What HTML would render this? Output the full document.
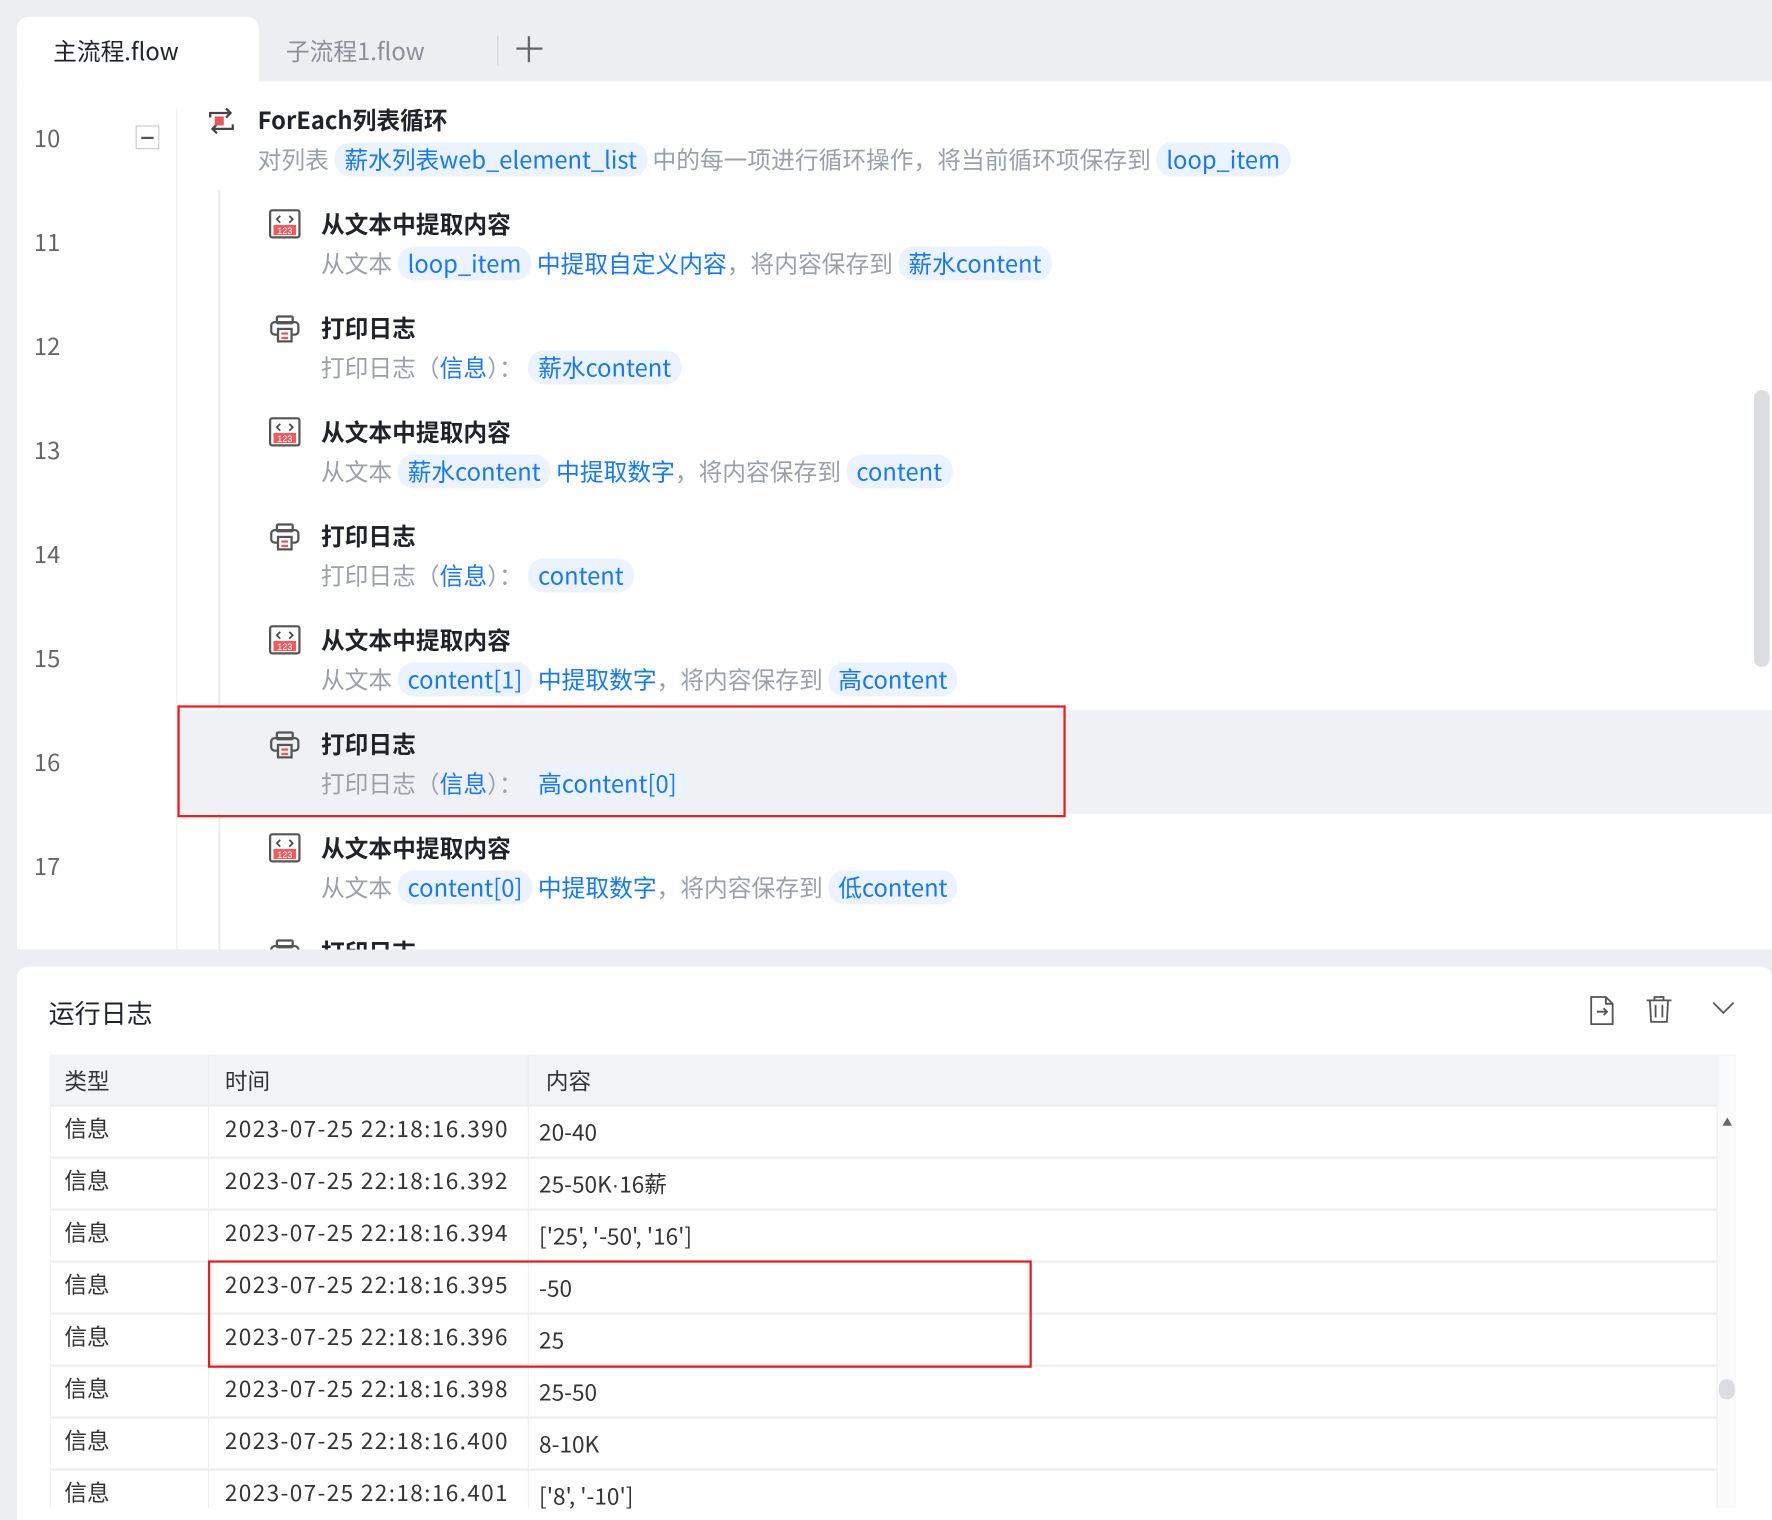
<!DOCTYPE html>
<html><head><meta charset="utf-8"><style>
*{margin:0;padding:0;box-sizing:border-box}
html,body{width:1772px;height:1508px;overflow:hidden;background:#eceef2}
#w{position:absolute;left:0;top:0;width:1568px;height:1334px;transform:scale(1.1301,1.1304);transform-origin:0 0;font-family:"Noto Sans CJK SC","Liberation Sans",sans-serif;color:#222}
.a{position:absolute;white-space:nowrap}
.tab{left:15px;top:15px;width:214px;height:60px;background:#fff;border-radius:10px 10px 0 0}
.main{left:15px;top:72px;width:1553px;height:768px;background:#fff}
.ln{left:30px;font-size:21px;color:#666;line-height:28px}
.t{font-size:21px;font-weight:bold;color:#1f2329;line-height:28px}
.d{font-size:21px;color:#9aa0aa;line-height:30px}
.d b{font-weight:normal;color:#1677ff}
.g{display:inline-block;background:#eaf3ff;color:#1677ff;border-radius:14px;padding:0 9px;line-height:30px}
.bot{left:15px;top:855px;width:1553px;height:490px;background:#fff;border-radius:10px 10px 0 0}
.cell{font-size:20px;color:#333;line-height:28px}
.tm{letter-spacing:1.2px}
.hl{left:44px;width:1475px;height:2px;background:#eceef1}
</style></head><body><div id="w">
<div class="a tab"></div>
<div class="a" style="left:47px;top:30px;font-size:21px;color:#1f2329">主流程.flow</div>
<div class="a" style="left:253px;top:30px;font-size:21px;color:#8a8f99">子流程1.flow</div>
<div class="a" style="left:440px;top:32px;width:1px;height:26px;background:#cfd2d8"></div>
<div class="a" style="left:457px;top:42px;width:23px;height:2px;background:#666"></div>
<div class="a" style="left:467px;top:32px;width:2px;height:23px;background:#666"></div>
<div class="a main"></div>
<div class="a" style="left:156px;top:96px;width:1px;height:744px;background:#eceef1"></div>
<div class="a" style="left:193px;top:168px;width:2px;height:672px;background:#eceef1"></div>
<div class="a" style="left:157px;top:628px;width:1411px;height:92px;background:#eff1f5"></div>
<div class="a" style="left:157px;top:624px;width:786px;height:99px;border:2px solid #ee1c1c"></div>
<div class="a" style="left:1552px;top:345px;width:14px;height:245px;background:#dcdde0;border-radius:7px"></div>
<div class="a" style="left:120px;top:111px;width:21px;height:21px;border:1px solid #c8cbd0;"></div>
<div class="a" style="left:125px;top:121px;width:11px;height:2px;background:#555"></div>

<div class="a ln" style="top:108px">10</div>
<div class="a ln" style="top:200px">11</div>
<div class="a ln" style="top:292px">12</div>
<div class="a ln" style="top:384px">13</div>
<div class="a ln" style="top:476px">14</div>
<div class="a ln" style="top:568px">15</div>
<div class="a ln" style="top:660px">16</div>
<div class="a ln" style="top:752px">17</div>

<svg class="a" style="left:182px;top:94px" width="28" height="26" viewBox="0 0 28 26" fill="none" stroke="#444" stroke-width="2"><path d="M4 10V6h18M18 2l4 4-4 4M24 16v4H6M10 24l-4-4 4-4"/><rect x="8" y="9" width="8" height="8" fill="#e8585a" stroke="none"/></svg>
<div class="a t" style="left:228px;top:92px">ForEach列表循环</div>
<div class="a d" style="left:228px;top:126px">对列表 <span class="g">薪水列表web_element_list</span> 中的每一项进行循环操作，将当前循环项保存到 <span class="g">loop_item</span></div>

<svg class="a" style="left:238px;top:185px" width="28" height="26"><rect x="1" y="1" width="26" height="24" rx="2" fill="#fff" stroke="#555" stroke-width="2"/><path d="M10 6l-3 3 3 3M18 6l3 3-3 3" stroke="#444" fill="none" stroke-width="1.5"/><rect x="4" y="14" width="20" height="9" fill="#ee5c5c"/><text x="14" y="22" font-size="8" fill="#fff" text-anchor="middle" font-family="Liberation Sans">123</text></svg>
<div class="a t" style="left:284px;top:184px">从文本中提取内容</div>
<div class="a d" style="left:284px;top:218px">从文本 <span class="g">loop_item</span> <b>中提取自定义内容</b>，将内容保存到 <span class="g">薪水content</span></div>

<svg class="a" style="left:238px;top:278px" width="28" height="26" fill="none" stroke="#555" stroke-width="2"><rect x="7" y="2" width="14" height="6" rx="1"/><rect x="2" y="7" width="24" height="11" rx="3"/><rect x="8" y="13" width="12" height="11" fill="#fff"/><path d="M11 17h6M11 21h6" stroke="#e8585a"/></svg>
<div class="a t" style="left:284px;top:276px">打印日志</div>
<div class="a d" style="left:284px;top:310px">打印日志（<b>信息</b>）： <span class="g">薪水content</span></div>

<svg class="a" style="left:238px;top:369px" width="28" height="26"><rect x="1" y="1" width="26" height="24" rx="2" fill="#fff" stroke="#555" stroke-width="2"/><path d="M10 6l-3 3 3 3M18 6l3 3-3 3" stroke="#444" fill="none" stroke-width="1.5"/><rect x="4" y="14" width="20" height="9" fill="#ee5c5c"/><text x="14" y="22" font-size="8" fill="#fff" text-anchor="middle" font-family="Liberation Sans">123</text></svg>
<div class="a t" style="left:284px;top:368px">从文本中提取内容</div>
<div class="a d" style="left:284px;top:402px">从文本 <span class="g">薪水content</span> <b>中提取数字</b>，将内容保存到 <span class="g">content</span></div>

<svg class="a" style="left:238px;top:462px" width="28" height="26" fill="none" stroke="#555" stroke-width="2"><rect x="7" y="2" width="14" height="6" rx="1"/><rect x="2" y="7" width="24" height="11" rx="3"/><rect x="8" y="13" width="12" height="11" fill="#fff"/><path d="M11 17h6M11 21h6" stroke="#e8585a"/></svg>
<div class="a t" style="left:284px;top:460px">打印日志</div>
<div class="a d" style="left:284px;top:494px">打印日志（<b>信息</b>）： <span class="g">content</span></div>

<svg class="a" style="left:238px;top:553px" width="28" height="26"><rect x="1" y="1" width="26" height="24" rx="2" fill="#fff" stroke="#555" stroke-width="2"/><path d="M10 6l-3 3 3 3M18 6l3 3-3 3" stroke="#444" fill="none" stroke-width="1.5"/><rect x="4" y="14" width="20" height="9" fill="#ee5c5c"/><text x="14" y="22" font-size="8" fill="#fff" text-anchor="middle" font-family="Liberation Sans">123</text></svg>
<div class="a t" style="left:284px;top:552px">从文本中提取内容</div>
<div class="a d" style="left:284px;top:586px">从文本 <span class="g">content[1]</span> <b>中提取数字</b>，将内容保存到 <span class="g">高content</span></div>

<svg class="a" style="left:238px;top:646px" width="28" height="26" fill="none" stroke="#555" stroke-width="2"><rect x="7" y="2" width="14" height="6" rx="1"/><rect x="2" y="7" width="24" height="11" rx="3"/><rect x="8" y="13" width="12" height="11" fill="#eff1f5"/><path d="M11 17h6M11 21h6" stroke="#e8585a"/></svg>
<div class="a t" style="left:284px;top:644px">打印日志</div>
<div class="a d" style="left:284px;top:678px">打印日志（<b>信息</b>）： <span class="g">高content[0]</span></div>

<svg class="a" style="left:238px;top:737px" width="28" height="26"><rect x="1" y="1" width="26" height="24" rx="2" fill="#fff" stroke="#555" stroke-width="2"/><path d="M10 6l-3 3 3 3M18 6l3 3-3 3" stroke="#444" fill="none" stroke-width="1.5"/><rect x="4" y="14" width="20" height="9" fill="#ee5c5c"/><text x="14" y="22" font-size="8" fill="#fff" text-anchor="middle" font-family="Liberation Sans">123</text></svg>
<div class="a t" style="left:284px;top:736px">从文本中提取内容</div>
<div class="a d" style="left:284px;top:770px">从文本 <span class="g">content[0]</span> <b>中提取数字</b>，将内容保存到 <span class="g">低content</span></div>

<svg class="a" style="left:238px;top:830px" width="28" height="26" fill="none" stroke="#555" stroke-width="2"><rect x="7" y="2" width="14" height="6" rx="1"/><rect x="2" y="7" width="24" height="11" rx="3"/></svg>
<div class="a t" style="left:284px;top:828px">打印日志</div>

<div class="a" style="left:15px;top:840px;width:1553px;height:15px;background:#eceef2"></div>

<div class="a bot"></div>
<div class="a" style="left:43px;top:878px;font-size:23px;color:#1f2329">运行日志</div>
<svg class="a" style="left:1405px;top:880px" width="26" height="28" fill="none" stroke="#555" stroke-width="1.6"><path d="M3 2h13l6 6v18H3zM16 2v6h6M8 15h9M14 12l3 3-3 3"/></svg>
<svg class="a" style="left:1455px;top:880px" width="26" height="26" fill="none" stroke="#555" stroke-width="1.6"><path d="M2 5h22M9 5V2h8v3M5 5l1 19h14l1-19M10 9v11M16 9v11"/></svg>
<svg class="a" style="left:1514px;top:884px" width="22" height="16" fill="none" stroke="#555" stroke-width="1.6"><path d="M2 3l9 9 9-9"/></svg>

<div class="a" style="left:44px;top:933px;width:1492px;height:401px;border:1px solid #eceef1;border-bottom:none"></div>
<div class="a" style="left:45px;top:934px;width:1474px;height:44px;background:#f3f4f6"></div>
<div class="a" style="left:1519px;top:934px;width:17px;height:400px;background:#fafafa;border-left:1px solid #eceef1"></div>
<div class="a" style="left:1524px;top:986px;font-size:9px;color:#666">▲</div>
<div class="a" style="left:1521px;top:1220px;width:14px;height:18px;border-radius:7px;background:#dcdde0"></div>
<div class="a" style="left:184px;top:934px;width:1px;height:400px;background:#eceef1"></div>
<div class="a" style="left:467px;top:934px;width:1px;height:400px;background:#eceef1"></div>
<div class="a hl" style="top:977px"></div>
<div class="a hl" style="top:1023px"></div>
<div class="a hl" style="top:1069px"></div>
<div class="a hl" style="top:1115px"></div>
<div class="a hl" style="top:1161px"></div>
<div class="a hl" style="top:1207px"></div>
<div class="a hl" style="top:1253px"></div>
<div class="a hl" style="top:1299px"></div>

<div class="a cell" style="left:57px;top:942px">类型</div>
<div class="a cell" style="left:199px;top:942px">时间</div>
<div class="a cell" style="left:483px;top:942px">内容</div>

<div class="a cell" style="left:57px;top:984px">信息</div><div class="a cell tm" style="left:199px;top:984px">2023-07-25 22:18:16.390</div><div class="a cell" style="left:477px;top:987px">20-40</div>
<div class="a cell" style="left:57px;top:1030px">信息</div><div class="a cell tm" style="left:199px;top:1030px">2023-07-25 22:18:16.392</div><div class="a cell" style="left:477px;top:1033px">25-50K<span style="font-family:'Liberation Sans'">·</span>16薪</div>
<div class="a cell" style="left:57px;top:1076px">信息</div><div class="a cell tm" style="left:199px;top:1076px">2023-07-25 22:18:16.394</div><div class="a cell" style="left:477px;top:1079px">['25', '-50', '16']</div>
<div class="a cell" style="left:57px;top:1122px">信息</div><div class="a cell tm" style="left:199px;top:1122px">2023-07-25 22:18:16.395</div><div class="a cell" style="left:477px;top:1125px">-50</div>
<div class="a cell" style="left:57px;top:1168px">信息</div><div class="a cell tm" style="left:199px;top:1168px">2023-07-25 22:18:16.396</div><div class="a cell" style="left:477px;top:1171px">25</div>
<div class="a cell" style="left:57px;top:1214px">信息</div><div class="a cell tm" style="left:199px;top:1214px">2023-07-25 22:18:16.398</div><div class="a cell" style="left:477px;top:1217px">25-50</div>
<div class="a cell" style="left:57px;top:1260px">信息</div><div class="a cell tm" style="left:199px;top:1260px">2023-07-25 22:18:16.400</div><div class="a cell" style="left:477px;top:1263px">8-10K</div>
<div class="a cell" style="left:57px;top:1306px">信息</div><div class="a cell tm" style="left:199px;top:1306px">2023-07-25 22:18:16.401</div><div class="a cell" style="left:477px;top:1309px">['8', '-10']</div>

<div class="a" style="left:184px;top:1115px;width:729px;height:95px;border:2px solid #ee1c1c"></div>
</div></body></html>
